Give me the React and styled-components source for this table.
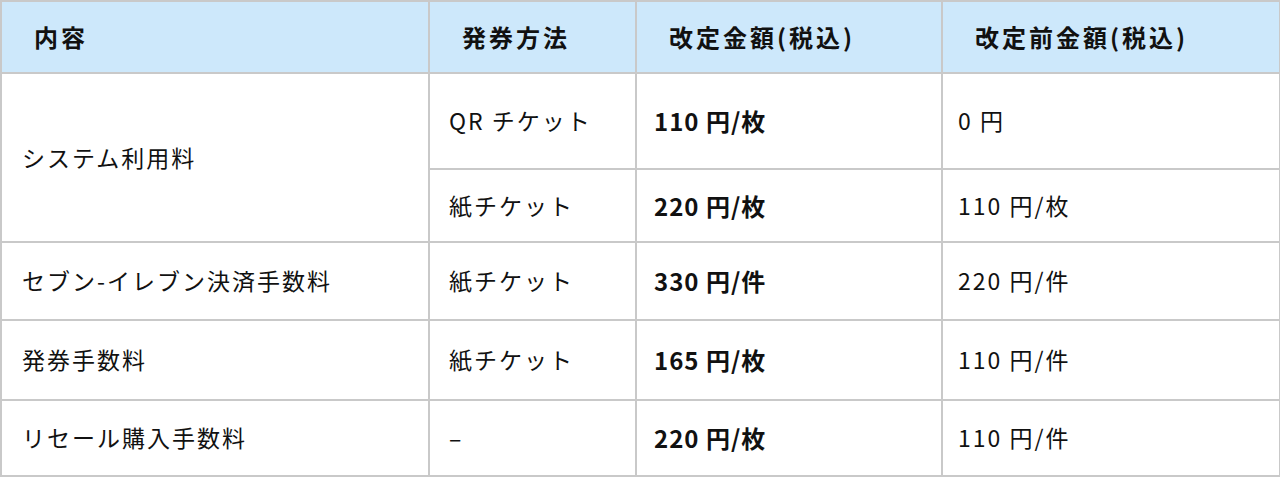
import styled, { createGlobalStyle } from 'styled-components';

const GlobalStyle = createGlobalStyle`
  body {
    margin: 0;
    background: #fff;
    font-family: 'Noto Sans CJK JP', 'Noto Sans', sans-serif;
    color: #111;
  }
`;

const Table = styled.table`
  width: 1279px;
  table-layout: fixed;
  border-collapse: collapse;
  font-size: 23px;
  line-height: 1.3;
`;

const Head = styled.th`
  height: 70px;
  padding: 0 0 0 32px;
  background: #cde8fb;
  border: 2px solid #c9c9c9;
  text-align: left;
  font-size: 24px;
  font-weight: 700;
  letter-spacing: 3px;
`;

const Row = styled.tr`
  height: ${({ $h }) => $h}px;
`;

const Cell = styled.td`
  padding: 0 0 0 ${({ $pad }) => $pad ?? 19}px;
  border: 2px solid #c9c9c9;
  vertical-align: middle;
  font-size: ${({ $bold }) => ($bold ? 24 : 23)}px;
  font-weight: ${({ $bold }) => ($bold ? 700 : 400)};
  letter-spacing: ${({ $bold }) => ($bold ? 1 : 2)}px;
  white-space: nowrap;
`;

const rows = [
  { name: 'セブン-イレブン決済手数料', method: '紙チケット', now: '330 円/件', before: '220 円/件', h: 78 },
  { name: '発券手数料', method: '紙チケット', now: '165 円/枚', before: '110 円/件', h: 80 },
  { name: 'リセール購入手数料', method: '–', now: '220 円/枚', before: '110 円/件', h: 76 },
];

const App = () => {
  return (
    <>
      <GlobalStyle />
      <Table>
        <colgroup>
          <col style={{ width: 428 }} />
          <col style={{ width: 207 }} />
          <col style={{ width: 306 }} />
          <col style={{ width: 338 }} />
        </colgroup>
        <thead>
          <tr>
            <Head>内容</Head>
            <Head>発券方法</Head>
            <Head>改定金額(税込)</Head>
            <Head>改定前金額(税込)</Head>
          </tr>
        </thead>
        <tbody>
          {/* system fee spans two ticket types */}
          <Row $h={96}>
            <Cell rowSpan={2} $pad={20}>システム利用料</Cell>
            <Cell>QR チケット</Cell>
            <Cell $bold $pad={17}>110 円/枚</Cell>
            <Cell $pad={15}>0 円</Cell>
          </Row>
          <Row $h={73}>
            <Cell>紙チケット</Cell>
            <Cell $bold $pad={17}>220 円/枚</Cell>
            <Cell $pad={15}>110 円/枚</Cell>
          </Row>
          {rows.map((r) => (
            <Row key={r.name} $h={r.h}>
              <Cell $pad={20}>{r.name}</Cell>
              <Cell>{r.method}</Cell>
              <Cell $bold $pad={17}>{r.now}</Cell>
              <Cell $pad={15}>{r.before}</Cell>
            </Row>
          ))}
        </tbody>
      </Table>
    </>
  );
};

export default App;
